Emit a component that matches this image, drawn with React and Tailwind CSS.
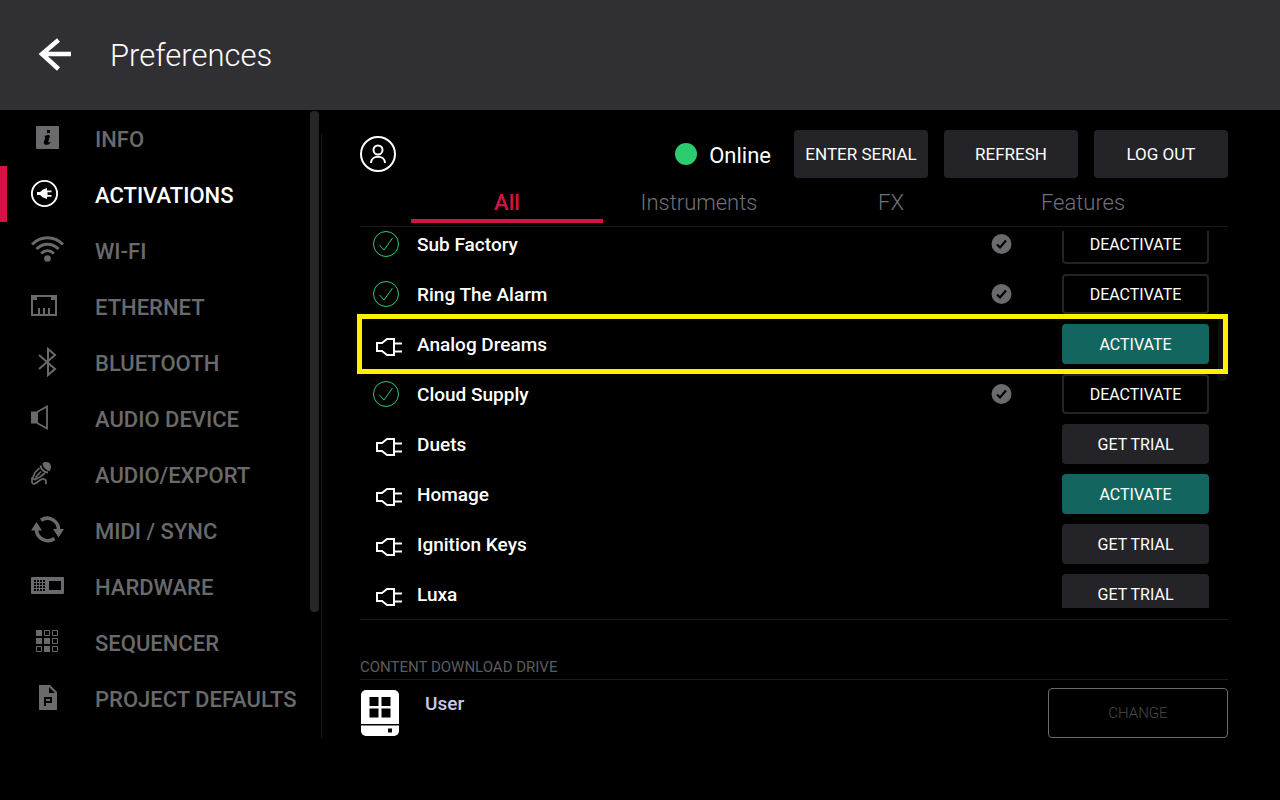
import React, { useState } from "react";

const InfoIcon = () => (
  <svg width="34" height="34" viewBox="0 0 34 34" fill="currentColor">
    <rect x="5" y="5" width="23" height="23" rx="1" />
    <g fill="#000">
      <rect x="16" y="9" width="3" height="3" />
      <path d="M13.500 15.500C15 14 19 13.300 18.800 15.500L17.300 20.500C17 22 18.200 21.600 19.600 20.400C19.600 22.800 17 24 15 23.800C13 23.600 12.500 22.200 13 20.500L14.300 16.800Z" />
    </g>
  </svg>
);

const ActivationsIcon = () => (
  <svg width="34" height="34" viewBox="0 0 34 34" fill="currentColor">
    <circle cx="13.500" cy="16.500" r="12.600" fill="none" stroke="currentColor" strokeWidth="1.900" />
    <path d="M6 15H9L12 12.500L16 11V13.500H20.500V15.200H16.500V18H20.500V19.700H16V22L12 20.500L9 18H6Z" />
  </svg>
);

const WifiIcon = () => (
  <svg width="34" height="34" viewBox="0 0 34 34" fill="none" stroke="currentColor" strokeWidth="3">
    <path d="M1 11.500C10 2.500 23 2.500 32 11.500" />
    <path d="M5.500 16C12 9.500 21 9.500 27.500 16" />
    <path d="M10.200 20.500C14 16.800 19 16.800 22.800 20.500" />
    <circle cx="16.500" cy="25.500" r="3.300" fill="currentColor" stroke="none" />
  </svg>
);

const EthernetIcon = () => (
  <svg width="34" height="34" viewBox="0 0 34 34" fill="none" stroke="currentColor" strokeWidth="2">
    <path d="M1 7H25V26H1Z" />
    <path d="M2 8H6V11H2ZM20 8H24V11H20Z" fill="currentColor" stroke="none" />
    <path d="M8 25V19M13 25V19M18 25V19" />
  </svg>
);

const BluetoothIcon = () => (
  <svg width="34" height="34" viewBox="0 0 34 34" fill="none" stroke="currentColor" strokeWidth="2">
    <path d="M8 10L24 24L17 30V4L24 10L8 24" />
  </svg>
);

const SpeakerIcon = () => (
  <svg width="34" height="34" viewBox="0 0 34 34" fill="none" stroke="currentColor" strokeWidth="1.800">
    <path d="M0 10.500H7V22.500H0Z" fill="currentColor" stroke="none" />
    <path d="M6 11L16 5.500V27.500L6 22" />
  </svg>
);

const MicIcon = () => (
  <svg width="34" height="34" viewBox="0 0 34 34" fill="none" stroke="currentColor" strokeWidth="1.700">
    <path d="M11.500 6.500C13.500 4.500 18 4.500 19.500 7.500C20.500 10 20 12.500 18.500 14C15.500 13.500 12 10.500 11.500 6.500Z" fill="currentColor" stroke="none" />
    <path d="M9.500 8.500C9.500 12 13 15.500 17 15.500" strokeWidth="2" />
    <path d="M8.500 11L4 15.500L1.500 21.500L4 22.500L9 20L14 16M4.500 20.500L10 14.500" />
    <path d="M1 20.500V25.500C3.500 29 6.500 24.500 10 22.500C13.500 20.800 16 23 14.800 27" />
  </svg>
);

const SyncIcon = () => (
  <svg width="34" height="34" viewBox="0 0 34 34" fill="none" stroke="currentColor" strokeWidth="3.600">
    <path d="M10 7.200C18 2 27.500 8 27.500 16.500" />
    <path d="M23.500 25.500C15.500 31 5.500 25 5.500 16.500" />
    <path d="M22 16H33L27.500 24.500ZM0 17.500H11L5.500 9Z" fill="currentColor" stroke="none" />
  </svg>
);

const HardwareIcon = () => (
  <svg width="34" height="34" viewBox="0 0 34 34">
    <rect y="8" width="33" height="17" rx="1" fill="currentColor" />
    <rect x="18" y="12" width="12" height="9" fill="#000" />
    <g stroke="#000" strokeWidth="2" strokeDasharray="2 1">
      <path d="M3 12H14M3 15H14M3 18H14M3 21H14" />
    </g>
  </svg>
);

const SequencerIcon = () => (
  <svg width="34" height="34" viewBox="0 0 34 34" fill="none" stroke="currentColor" strokeWidth="1">
    <path d="M13.500 5.500H18.500V10.500H13.500ZM21.500 5.500H26.500V10.500H21.500ZM21.500 13.500H26.500V18.500H21.500ZM5.500 21.500H10.500V26.500H5.500ZM21.500 21.500H26.500V26.500H21.500Z" />
    <path d="M5 5H11V11H5ZM5 13H11V19H5ZM13 13H19V19H13ZM13 21H19V27H13Z" fill="currentColor" stroke="none" />
  </svg>
);

const ProjectIcon = () => (
  <svg width="34" height="34" viewBox="0 0 34 34">
    <path d="M8 4H19L26 11V29H8Z" fill="currentColor" />
    <path d="M18 6V12H24" fill="#000" />
    <path d="M14 25V17H20V21H14" fill="none" stroke="#000" strokeWidth="2" />
  </svg>
);

const CheckCircle = () => (
  <svg width="26" height="26" viewBox="0 0 26 26" fill="none" stroke="#2ecc71">
    <circle cx="13" cy="13" r="12.500" />
    <path d="M6.500 14L11 19L19.500 7" />
  </svg>
);

const PlugIcon = () => (
  <svg width="26" height="26" viewBox="0 0 26 26" fill="none" stroke="#fff" strokeWidth="2">
    <path d="M1 10H6L11 6H18V22H11L6 18H1Z" />
    <path d="M18 10.500H26M18 18.500H26" />
  </svg>
);

const DoneBadge = () => (
  <svg width="21" height="20" viewBox="0 0 21 20">
    <circle cx="10.500" cy="10" r="10" fill="#6a6a6c" />
    <path d="M6 10.500L9 13.500L15 6.500" fill="none" stroke="#000" strokeWidth="2.200" />
  </svg>
);

const DriveIcon = () => (
  <svg width="38" height="46" viewBox="0 0 38 46">
    <rect width="38" height="46" rx="5" fill="#fff" />
    <path d="M8.500 7H17.500V16H8.500ZM20.500 7H29.500V16H20.500ZM8.500 18.500H17.500V27.500H8.500ZM20.500 18.500H29.500V27.500H20.500ZM0 34H38V35.500H0ZM27 38.500H31V42.500H27Z" fill="#000" />
  </svg>
);

const menuItems = [
  { title: "INFO", icon: <InfoIcon /> },
  { title: "ACTIVATIONS", icon: <ActivationsIcon /> },
  { title: "WI-FI", icon: <WifiIcon /> },
  { title: "ETHERNET", icon: <EthernetIcon /> },
  { title: "BLUETOOTH", icon: <BluetoothIcon /> },
  { title: "AUDIO DEVICE", icon: <SpeakerIcon /> },
  { title: "AUDIO/EXPORT", icon: <MicIcon /> },
  { title: "MIDI / SYNC", icon: <SyncIcon /> },
  { title: "HARDWARE", icon: <HardwareIcon /> },
  { title: "SEQUENCER", icon: <SequencerIcon /> },
  { title: "PROJECT DEFAULTS", icon: <ProjectIcon /> },
];

const tabs = ["All", "Instruments", "FX", "Features"];

const plugins = [
  { name: "Sub Factory", status: "active" },
  { name: "Ring The Alarm", status: "active" },
  { name: "Analog Dreams", status: "owned", highlighted: true },
  { name: "Cloud Supply", status: "active" },
  { name: "Duets", status: "trial" },
  { name: "Homage", status: "owned" },
  { name: "Ignition Keys", status: "trial" },
  { name: "Luxa", status: "trial" },
];

const actions = {
  active: { label: "DEACTIVATE", style: "border-2 border-[#242428] bg-black" },
  owned: { label: "ACTIVATE", style: "bg-[#136660]" },
  trial: { label: "GET TRIAL", style: "bg-[#242428]" },
};

const Sidebar = () => {
  const [current, setCurrent] = useState("ACTIVATIONS");

  return (
    <aside className="flex w-[322px] shrink-0">
      <nav className="flex-1">
        <ul>
          {menuItems.map(({ title, icon }) => (
            <li key={title}>
              <button
                onClick={() => setCurrent(title)}
                className={`flex h-14 w-full items-center gap-[30px] border-l-[7px] pl-6 text-left text-[22px] font-medium whitespace-nowrap ${
                  current === title
                    ? "border-[#d41245] text-white"
                    : "border-transparent text-[#6a6a6c]"
                }`}
              >
                {icon}
                <span className="pt-0.5">{title}</span>
              </button>
            </li>
          ))}
        </ul>
      </nav>
      <div className="mt-px mr-0.5 h-[501px] w-[9px] rounded-sm bg-[#262626]" />
      <div className="mt-6 w-px bg-[#1b1b1b]" />
    </aside>
  );
};

const PluginRow = ({ name, status, highlighted }) => {
  const { label, style } = actions[status];

  return (
    <li className="relative flex h-[50px] items-center pr-[19px] pl-[13px]">
      <span className={status === "active" ? "w-11" : "w-11 pt-1 pl-[3px]"}>
        {status === "active" ? <CheckCircle /> : <PlugIcon />}
      </span>
      <span className="flex-1 pt-0.5 text-[19px] font-medium">{name}</span>
      {status === "active" && <DoneBadge />}
      <button className={`ml-[50px] h-10 w-[147px] rounded pt-px text-base ${style}`}>{label}</button>
      {highlighted && (
        <div className="pointer-events-none absolute -top-[5px] right-0 -bottom-[5px] -left-[3px] z-10 border-5 border-[#fff200]" />
      )}
    </li>
  );
};

const App = () => {
  const [tab, setTab] = useState("All");

  return (
    <div className="min-h-screen bg-black font-['Roboto',sans-serif] text-white">
      <header className="flex h-[110px] items-center bg-[#302f34] pl-[38px]">
        <button aria-label="Back" className="mr-[38px]">
          <svg width="34" height="34" viewBox="0 0 34 34" fill="none" stroke="#fff" strokeWidth="4.500">
            <path d="M20.500 2L4 16L20.500 31M4 16H33" />
          </svg>
        </button>
        <h1 className="pt-0.5 text-[31px] font-light">Preferences</h1>
      </header>

      <div className="flex">
        <Sidebar />

        <main className="min-w-0 flex-1 pt-5 pr-[52px] pl-[38px]">
          <div className="flex items-center gap-4">
            <svg width="36" height="36" viewBox="0 0 36 36" fill="none" stroke="#fff" strokeWidth="2" className="mr-auto">
              <circle cx="18" cy="18" r="17" />
              <circle cx="18" cy="14" r="4.500" />
              <path d="M11 27C11 18.500 25 18.500 25 27" />
            </svg>
            <span className="mr-[7px] flex items-center gap-3 text-[22px]">
              <span className="size-[22px] rounded-full bg-[#2ecc71]" />
              <span className="pt-0.5">Online</span>
            </span>
            {["ENTER SERIAL", "REFRESH", "LOG OUT"].map((label) => (
              <button key={label} className="h-12 w-[134px] rounded bg-[#242428] pt-0.5 text-[17px]">
                {label}
              </button>
            ))}
          </div>

          <div className="border-b border-[#1b1b1b] pr-[49px] pb-[3px] pl-[51px]">
            <div className="grid grid-cols-4">
              {tabs.map((item) => (
                <button
                  key={item}
                  onClick={() => setTab(item)}
                  className={`h-[45px] border-b-4 pt-2 text-[22px] ${
                    tab === item
                      ? "border-[#d41245] font-medium text-[#d41245]"
                      : "border-transparent font-light text-[#70707c]"
                  }`}
                >
                  {item}
                </button>
              ))}
            </div>
          </div>

          <div className="relative mt-1 -ml-[3px] h-[377px] overflow-hidden pl-[3px]">
            <ul className="-mt-3">
              {plugins.map((plugin) => (
                <PluginRow key={plugin.name} {...plugin} />
              ))}
            </ul>
            <div className="absolute top-[88px] right-px h-[62px] w-[9px] rounded-sm bg-[#0f0f0f]" />
          </div>

          <section className="mt-[11px] border-t border-[#1b1b1b] pt-[35px]">
            <h2 className="border-b border-[#1b1b1b] text-[15px] leading-6 text-[#5c5c5e]">
              CONTENT DOWNLOAD DRIVE
            </h2>
            <div className="mt-2 flex items-start">
              <span className="mt-0.5 ml-px">
                <DriveIcon />
              </span>
              <span className="ml-[26px] flex-1 text-[19px] leading-8 font-medium text-[#c6cae4]">User</span>
              <button disabled className="h-[50px] w-[180px] rounded border border-[#6a6a6c] text-[15px] font-light text-[#4a4a4c]">
                CHANGE
              </button>
            </div>
          </section>
        </main>
      </div>
    </div>
  );
};

export default App;
